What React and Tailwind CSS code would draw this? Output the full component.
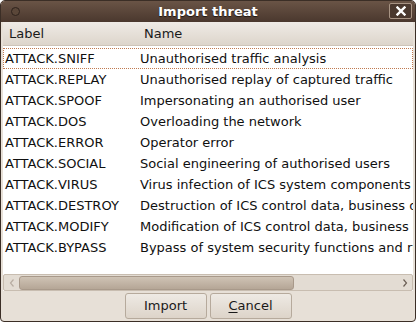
import React from 'react';

const rows = [
  ['ATTACK.SNIFF', 'Unauthorised traffic analysis'],
  ['ATTACK.REPLAY', 'Unauthorised replay of captured traffic'],
  ['ATTACK.SPOOF', 'Impersonating an authorised user'],
  ['ATTACK.DOS', 'Overloading the network'],
  ['ATTACK.ERROR', 'Operator error'],
  ['ATTACK.SOCIAL', 'Social engineering of authorised users'],
  ['ATTACK.VIRUS', 'Virus infection of ICS system components'],
  ['ATTACK.DESTROY', 'Destruction of ICS control data, business data'],
  ['ATTACK.MODIFY', 'Modification of ICS control data, business data'],
  ['ATTACK.BYPASS', 'Bypass of system security functions and rules'],
];

export default function App() {
  return (
    <div className="w-[416px] h-[322px] overflow-hidden bg-white" style={{ fontFamily: '"DejaVu Sans", sans-serif' }}>
      <div className="w-[416px] h-[322px] flex flex-col bg-[#e7e0d7] border border-[#3b2e26] rounded-t-[5px] rounded-b-[4px] overflow-hidden">
        {/* Title bar */}
        <div className="h-[21px] shrink-0 relative flex items-center justify-center bg-gradient-to-b from-[#6a5446] to-[#4a382e]">
          <div className="absolute left-[10px] top-[6px] w-[9px] h-[9px] rounded-full border border-[#2e221c] bg-[#5b4739]" />
          <span className="text-white font-bold text-[13px] leading-none [text-shadow:0_1px_1px_#1e1510]">Import threat</span>
          <div className="absolute right-[3px] top-[2px] w-[23px] h-[16px] rounded-[2px] border border-[#a89484] bg-[#4a382e] flex items-center justify-center">
            <svg width="10" height="10" viewBox="0 0 10 10">
              <path d="M1.5 1.5 L8.5 8.5 M8.5 1.5 L1.5 8.5" stroke="white" strokeWidth="2.4" strokeLinecap="square" />
            </svg>
          </div>
        </div>

        {/* Body */}
        <div className="flex-1 flex flex-col px-[2px]">
          <div className="flex-1 flex flex-col bg-white overflow-hidden">
            <div className="h-[24px] shrink-0 flex items-center text-[13px] text-[#1a1a1a] bg-gradient-to-b from-[#efebe6] to-[#ddd5cb] border-b border-[#cfc5b9]">
              <span className="w-[137px] pl-[6px]">Label</span>
              <span className="pl-[4px]">Name</span>
            </div>
            <div className="flex-1 pt-[2px]">
              {rows.map(([label, name], i) => (
                <div
                  key={label}
                  className={`h-[21px] flex items-center text-[13px] text-[#101010] whitespace-nowrap ${i === 0 ? 'border border-dotted border-[#c07a50]' : 'border border-transparent'}`}
                >
                  <span className="w-[136px] pl-[1px] shrink-0">{label}</span>
                  <span>{name}</span>
                </div>
              ))}
            </div>
            {/* Horizontal scrollbar */}
            <div className="h-[17px] shrink-0 flex items-center bg-[#e3dcd3] border border-[#c8bdb0] rounded-[2px]">
              <div className="w-[15px] flex items-center justify-center">
                <svg width="6" height="8" viewBox="0 0 6 8"><path d="M4.5 0.5 L1.5 4 L4.5 7.5" stroke="#b8ada2" strokeWidth="1.2" fill="none" /></svg>
              </div>
              <div className="w-[275px] h-[14px] rounded-[3px] border border-[#a8998a] bg-gradient-to-b from-[#cfc3b5] to-[#b5a696]" />
              <div className="flex-1" />
              <div className="w-[15px] flex items-center justify-center">
                <svg width="6" height="8" viewBox="0 0 6 8"><path d="M1.5 0.5 L4.5 4 L1.5 7.5" stroke="#6b5f55" strokeWidth="1.2" fill="none" /></svg>
              </div>
            </div>
          </div>

          {/* Buttons */}
          <div className="h-[30px] shrink-0 flex items-center justify-center gap-[3px] pb-[1px]">
            <button className="w-[82px] h-[26px] rounded-[3px] border border-[#b6aa9c] bg-gradient-to-b from-[#eeeae4] to-[#ddd4c9] text-[13px] text-[#1a1a1a]">
              Import
            </button>
            <button className="w-[82px] h-[26px] rounded-[3px] border border-[#b6aa9c] bg-gradient-to-b from-[#eeeae4] to-[#ddd4c9] text-[13px] text-[#1a1a1a]">
              <span className="underline underline-offset-2">C</span>ancel
            </button>
          </div>
        </div>
      </div>
    </div>
  );
}
